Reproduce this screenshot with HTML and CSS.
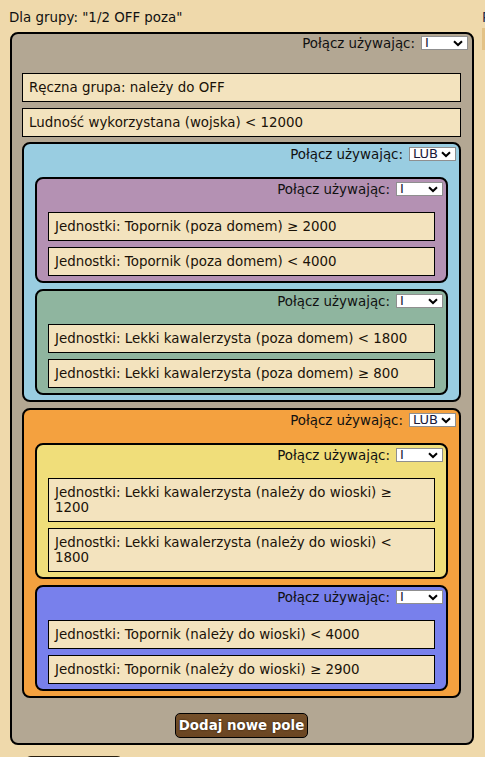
FILE: index.html
```html
<!DOCTYPE html>
<html lang="pl">
<head>
<meta charset="utf-8">
<title>Grupa</title>
<link rel="stylesheet" href="styles.css">
</head>
<body>
<div class="page">
  <div class="main">
    <div class="title">Dla grupy: "1/2 OFF poza"</div>
    <div class="box box-outer">
      <div class="hdr">Połącz używając: <span class="sel">I<svg class="chev" viewBox="0 0 10 7" width="10" height="7"><path d="M1 1.2 L5 5 L9 1.2" fill="none" stroke="#000" stroke-width="2"/></svg></span></div>
      <div class="item">Ręczna grupa: należy do OFF</div>
      <div class="item">Ludność wykorzystana (wojska) &lt; 12000</div>

      <div class="box box-blue">
        <div class="hdr">Połącz używając: <span class="sel">LUB<svg class="chev" viewBox="0 0 10 7" width="10" height="7"><path d="M1 1.2 L5 5 L9 1.2" fill="none" stroke="#000" stroke-width="2"/></svg></span></div>
        <div class="box box-purple">
          <div class="hdr">Połącz używając: <span class="sel">I<svg class="chev" viewBox="0 0 10 7" width="10" height="7"><path d="M1 1.2 L5 5 L9 1.2" fill="none" stroke="#000" stroke-width="2"/></svg></span></div>
          <div class="item">Jednostki: Topornik (poza domem) ≥ 2000</div>
          <div class="item">Jednostki: Topornik (poza domem) &lt; 4000</div>
        </div>
        <div class="box box-green">
          <div class="hdr">Połącz używając: <span class="sel">I<svg class="chev" viewBox="0 0 10 7" width="10" height="7"><path d="M1 1.2 L5 5 L9 1.2" fill="none" stroke="#000" stroke-width="2"/></svg></span></div>
          <div class="item">Jednostki: Lekki kawalerzysta (poza domem) &lt; 1800</div>
          <div class="item">Jednostki: Lekki kawalerzysta (poza domem) ≥ 800</div>
        </div>
      </div>

      <div class="box box-orange">
        <div class="hdr">Połącz używając: <span class="sel">LUB<svg class="chev" viewBox="0 0 10 7" width="10" height="7"><path d="M1 1.2 L5 5 L9 1.2" fill="none" stroke="#000" stroke-width="2"/></svg></span></div>
        <div class="box box-yellow">
          <div class="hdr">Połącz używając: <span class="sel">I<svg class="chev" viewBox="0 0 10 7" width="10" height="7"><path d="M1 1.2 L5 5 L9 1.2" fill="none" stroke="#000" stroke-width="2"/></svg></span></div>
          <div class="item">Jednostki: Lekki kawalerzysta (należy do wioski) ≥ 1200</div>
          <div class="item">Jednostki: Lekki kawalerzysta (należy do wioski) &lt; 1800</div>
        </div>
        <div class="box box-violet">
          <div class="hdr">Połącz używając: <span class="sel">I<svg class="chev" viewBox="0 0 10 7" width="10" height="7"><path d="M1 1.2 L5 5 L9 1.2" fill="none" stroke="#000" stroke-width="2"/></svg></span></div>
          <div class="item">Jednostki: Topornik (należy do wioski) &lt; 4000</div>
          <div class="item">Jednostki: Topornik (należy do wioski) ≥ 2900</div>
        </div>
      </div>

      <div class="actions"><button class="btn" type="button">Dodaj nowe pole</button></div>
    </div>
    <div class="next-btn"></div>
  </div>
  <div class="side">
    <div class="side-title">Przypisz</div>
    <div class="side-bar"></div>
  </div>
</div>
</body>
</html>
```

FILE: styles.css
```css
html, body {
  margin: 0;
  padding: 0;
}
body {
  background: #efd9ab;
  font-family: "DejaVu Sans", Verdana, sans-serif;
  font-size: 13.4px;
  line-height: 15px;
  color: #000;
  overflow: hidden;
  height: 757px;
}
.page {
  display: flex;
  align-items: flex-start;
  width: 600px;
}
.main {
  width: 464px;
  padding-left: 10px;
  flex: none;
}
.title {
  padding-top: 10px;
  margin-left: -1px;
  margin-bottom: 7px;
  color: #111;
}
.box {
  border: 2px solid #000;
  border-radius: 8px;
  padding: 0 11px 5px 11px;
  display: flex;
  flex-direction: column;
  gap: 6px;
}
.box-outer {
  background: #b3a793;
  padding: 0 11px 5px 10px;
}
.box-blue { background: #99cde1; margin-top: -1px; }
.box-purple { background: #b491b3; }
.box-green { background: #8fb59f; }
.box-orange { background: #f4a13f; }
.box-yellow { background: #f0de7a; }
.box-violet { background: #7880ec; }

.hdr {
  display: flex;
  justify-content: flex-end;
  align-items: center;
  gap: 6px;
  margin-right: -8px;
  padding-top: 3px;
  margin-bottom: 10px;
  height: 14px;
  color: #111;
}
.box-outer > .hdr {
  padding-top: 2px;
  margin-bottom: 17px;
  margin-right: -7px;
}
.sel {
  display: flex;
  align-items: center;
  justify-content: space-between;
  box-sizing: border-box;
  width: 47px;
  height: 14px;
  background: #fff;
  border: 1px solid #8f8f8f;
  padding: 0 4px 0 3px;
  font-size: 13px;
  line-height: 12px;
  color: #1a1a3a;
}
.chev { flex: none; }
.item {
  background: #f3e3be;
  border: 1px solid #000;
  padding: 6px 10px 6px 6px;
  color: #1a1208;
}
.actions {
  display: flex;
  justify-content: center;
  margin-top: 9px;
}
.btn {
  font-family: "DejaVu Sans", Verdana, sans-serif;
  font-size: 13.4px;
  font-weight: bold;
  line-height: 15px;
  white-space: nowrap;
  color: #fff;
  text-shadow: 0 0 2px #2a1a08;
  background: linear-gradient(#75502a, #6a4522);
  border: 1px solid #000;
  border-radius: 5px;
  padding: 4px 3px;
  cursor: pointer;
}
.next-btn {
  margin: 11px 0 0 15px;
  width: 98px;
  height: 20px;
  border-top: 2px solid #2a2010;
  border-radius: 6px 6px 0 0;
}
.side {
  margin-left: 8px;
  flex: none;
  width: 120px;
}
.side-title {
  padding-top: 10px;
  height: 15px;
  color: #1a2a4a;
}
.side-bar {
  margin-top: 3px;
  height: 22px;
  background: #e3c286;
}
```
